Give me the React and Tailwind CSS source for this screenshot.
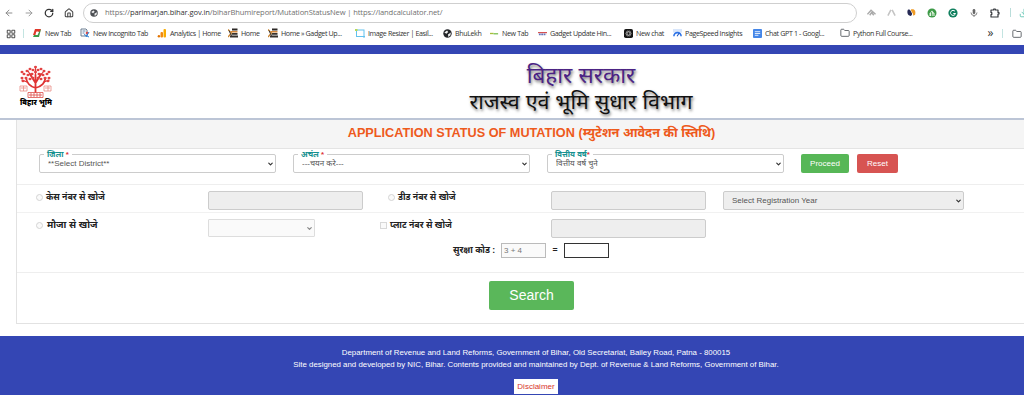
import {
    ArrowLeft,
    ArrowRight,
    ChevronDown,
    Download,
    Folder,
    House,
    LayoutGrid,
    RotateCw,
} from 'lucide-react';
import clsx from 'clsx';

function TabIcon() {
    return (
        <svg viewBox="0 0 10 10" className="size-[10px]">
            <path d="M3 1h6L8 4H4.500L3.500 7H1z" fill="#e0392b" />
            <path d="M9 1 7 9H1l1-2h3.500l1.500-3z" fill="#3f9a4b" />
            <path d="M4.500 3.500h2L5.500 6.500h-2z" fill="#fff" />
        </svg>
    );
}

function IncognitoIcon() {
    return (
        <svg viewBox="0 0 10 10" className="size-[10px]">
            <path d="M1 1h5l1 1v6H1z" fill="#fff" stroke="#5c7186" strokeWidth=".9" />
            <path d="M2.500 3h3M2.500 5h2" stroke="#5279a6" strokeWidth=".9" />
            <circle cx="7" cy="5" r="1.300" fill="#d94a4a" />
            <path d="M4 6.500 9 9M6 9l3-5" stroke="#2a80d8" strokeWidth="1" />
        </svg>
    );
}

function AnalyticsIcon() {
    return (
        <svg viewBox="0 0 10 10" className="size-[10px]">
            <rect x="6.500" y="1" width="2.500" height="8.500" rx="1" fill="#f9ab00" />
            <rect x="3.500" y="4" width="2.500" height="5.500" rx="1" fill="#f08a12" />
            <circle cx="1.900" cy="8.300" r="1.200" fill="#e37400" />
        </svg>
    );
}

function GadgetIcon() {
    return (
        <svg viewBox="0 0 10 10" className="size-[10px]">
            <path d="M4 .5h5.500v2H4z" fill="#2c2926" />
            <path d="M3 3h6.500v1.500H3z" fill="#d5893d" />
            <path d="M3.500 5h6v1.700h-6zM2 7.500h8v2H2z" fill="#35302c" />
            <path d="M0 1.500 3.500 5 0 9" fill="none" stroke="#c98532" strokeWidth="1.300" />
            <path d="M1 2.500 3.500 8" stroke="#3c3733" strokeWidth="1" />
        </svg>
    );
}

function ResizerIcon() {
    return (
        <svg viewBox="0 0 10 10" className="size-[10px]">
            <rect x="1.500" y="2" width="7.500" height="6.500" fill="#fff" stroke="#62c2ee" />
            <path d="M0 1h2.500v2H0z" fill="#b8d957" />
            <path d="M8 8h2v1.500H8z" fill="#62c2ee" />
        </svg>
    );
}

function GlobeIcon({ className, color }) {
    return (
        <svg viewBox="0 0 10 10" className={className}>
            <circle cx="5" cy="5" r="4.700" fill={color} />
            <path d="M1.500 3.800 4.500 1.800l1.300 1.500L3.800 5.200zM5.500 6 8.700 4l-.4 3-2.300 1.800z" fill="#f0f0f0" />
        </svg>
    );
}

function BhulekhIcon() {
    return <GlobeIcon className="size-[9px]" color="#24262a" />;
}

function DashIcon() {
    return (
        <svg viewBox="0 0 10 10" className="size-[9px]">
            <path d="M0 5h4" stroke="#a5bf3a" strokeWidth="1.500" />
            <path d="M4 5.300h5" stroke="#7fc257" strokeWidth="1.500" />
        </svg>
    );
}

function HindiIcon() {
    return (
        <svg viewBox="0 0 10 10" className="size-[9px]">
            <path d="M0 4h10" stroke="#d65252" strokeWidth="1.300" />
            <path d="M1 6h8" stroke="#6472b8" strokeWidth="1.800" strokeDasharray="2 .6" />
        </svg>
    );
}

function ChatIcon() {
    return (
        <svg viewBox="0 0 10 10" className="size-[9px]">
            <rect width="10" height="10" rx="2" fill="#161616" />
            <g fill="none" stroke="#b5b5b5" strokeWidth=".6">
                <ellipse cx="5" cy="5" rx="3.200" ry="1.600" />
                <ellipse cx="5" cy="5" rx="3.200" ry="1.600" transform="rotate(60 5 5)" />
                <ellipse cx="5" cy="5" rx="3.200" ry="1.600" transform="rotate(120 5 5)" />
            </g>
        </svg>
    );
}

function SpeedIcon() {
    return (
        <svg viewBox="0 0 10 10" className="size-[9px]">
            <path d="M0 0h10v4H0z" fill="#d8e6fb" />
            <path d="M1 8a4 4 0 0 1 8 0" fill="none" stroke="#2e74e8" strokeWidth="1.800" />
            <path d="M4.500 8 7 4.500" stroke="#1a56c4" strokeWidth="1.200" />
        </svg>
    );
}

function DocsIcon() {
    return (
        <svg viewBox="0 0 10 10" className="size-[9px]">
            <rect width="10" height="10" rx="1" fill="#4486e8" />
            <path d="M2 3h6M2 5h6M2 7h4" stroke="#fff" strokeWidth=".9" />
        </svg>
    );
}

function FolderIcon() {
    return <Folder className="size-[10px] text-[#4b4f54]" strokeWidth={2} />;
}

const bookmarks = [
    { label: 'New Tab', icon: TabIcon, width: 'w-[48px]' },
    { label: 'New Incognito Tab', icon: IncognitoIcon, width: 'w-[77px]' },
    { label: 'Analytics | Home', icon: AnalyticsIcon, width: 'w-[71px]' },
    { label: 'Home', icon: GadgetIcon, width: 'w-[40px]' },
    { label: 'Home » Gadget Up...', icon: GadgetIcon, width: 'w-[87px]' },
    { label: 'Image Resizer | Easil...', icon: ResizerIcon, width: 'w-[87px]' },
    { label: 'BhuLekh', icon: BhulekhIcon, width: 'w-[47px]' },
    { label: 'New Tab', icon: DashIcon, width: 'w-[48px]' },
    { label: 'Gadget Update Hin...', icon: HindiIcon, width: 'w-[86px]' },
    { label: 'New chat', icon: ChatIcon, width: 'w-[49px]' },
    { label: 'PageSpeed Insights', icon: SpeedIcon, width: 'w-[80px]' },
    { label: 'Chat GPT 1 - Googl...', icon: DocsIcon, width: 'w-[88px]' },
    { label: 'Python Full Course...', icon: FolderIcon, width: 'w-[80px]' },
];

function Extensions() {
    return (
        <div className="ml-[10px] flex items-center gap-[11px]">
            <svg viewBox="0 0 10 10" className="size-[9px]">
                <path d="M.5 7 4.500 2.500 9.500 7M3 8l2.200-3L7.500 8" fill="none" stroke="#aaa" strokeWidth="1.600" />
            </svg>
            <svg viewBox="0 0 10 10" className="size-[9px]">
                <path d="M1 8.500 4.300 2M9 8.500 5.700 2" stroke="#c4c4c4" strokeWidth="1.700" />
            </svg>
            <svg viewBox="0 0 10 10" className="size-[9px]">
                <path d="M1 2C4 1 4 4 5 5s1 3-1 4C0 8 0 4 1 2z" fill="#262a55" />
                <path d="M4.500 1.500C9 .5 10 4 9 7.500L7 8.500C7 5 4 4.500 4.500 1.500z" fill="#ef9c28" />
            </svg>
            <svg viewBox="0 0 10 10" className="size-[10px]">
                <circle cx="5" cy="5" r="4.500" fill="#3d9a47" />
                <path d="M2.500 5.500 5 2.500l2.500 3V8h-5z" fill="#e5f3e4" />
                <path d="M4.500 4v4M6 5.500V8" stroke="#3d9a47" strokeWidth=".8" />
            </svg>
            <svg viewBox="0 0 10 10" className="size-[10px]">
                <circle cx="5" cy="5" r="4.600" fill="#11805f" />
                <path d="M7 3.300A2.500 2.500 0 1 0 7.500 5.500H5.300" fill="none" stroke="#fff" strokeWidth="1" />
            </svg>
            <svg viewBox="0 0 10 10" className="size-[10px]">
                <rect x="3.700" y="1" width="2.600" height="5" rx="1.300" fill="#666" />
                <path d="M2 4.500a3 3 0 0 0 6 0M5 7.500V9" fill="none" stroke="#777" strokeWidth=".9" />
            </svg>
            <svg viewBox="0 0 10 10" className="size-[10px]">
                <path
                    d="M1 2h2.700V1h1.600v1H8v2.500h1v1.500H8V9H1V6.500h.8V4.500H1z"
                    fill="none"
                    stroke="#35383c"
                    strokeWidth="1.200"
                    strokeLinejoin="round"
                />
            </svg>
            <span className="-ml-px h-[9px] w-px bg-[#b9ddda]" />
            <Download className="-ml-[3px] size-[10px] shrink-0 text-[#66c6b5]" strokeWidth={2.200} />
        </div>
    );
}

function Browser() {
    return (
        <div className="h-[45px] overflow-hidden bg-white font-['Open_Sans','Noto_Sans',sans-serif]">
            <div className="flex h-[25px] w-[1040px] items-center pl-[4px]">
                <div className="flex w-[79px] items-center">
                    <ArrowLeft className="size-[10px] text-[#888]" strokeWidth={2.300} />
                    <ArrowRight className="ml-[10px] size-[10px] text-[#999]" strokeWidth={2.300} />
                    <RotateCw className="ml-[10px] size-[10px] text-[#333]" strokeWidth={3} />
                    <House className="ml-[10px] size-[10px] text-[#444]" strokeWidth={2.500} />
                </div>
                <div className="flex h-[20px] w-[774px] items-center rounded-full border border-[#cfcfcf] pl-[6px]">
                    <GlobeIcon className="size-[8px]" color="#4d5054" />
                    <span className="ml-[7px] text-[7.600px] tracking-[-0.120px] whitespace-nowrap text-[#707070]">
                        https://<span className="text-[#333]">parimarjan.bihar.gov.in</span>
                        /biharBhumireport/MutationStatusNew | https://landcalculator.net/
                    </span>
                </div>
                <Extensions />
            </div>
            <div className="flex h-[17px] w-[1024px] items-center pl-[6px] text-[7.100px] tracking-[-0.380px] text-[#333]">
                <LayoutGrid className="size-[10px] text-[#555]" strokeWidth={2.500} />
                <span className="mr-[8px] ml-[7px] h-[9px] w-px bg-[#c3e4e1]" />
                {bookmarks.map(({ label, icon: Icon, width }, index) => (
                    <div key={index} className={clsx('flex shrink-0 items-center gap-[3px] whitespace-nowrap', width)}>
                        <span className="flex w-[10px] shrink-0 justify-center">
                            <Icon />
                        </span>
                        {label}
                    </div>
                ))}
                <span className="ml-auto pb-[2px] text-[12px] leading-none">»</span>
                <span className="mr-[9px] ml-[9px] h-[9px] w-px bg-[#c3e4e1]" />
                <span className="mr-[2px]">
                    <FolderIcon />
                </span>
            </div>
        </div>
    );
}

function Logo() {
    return (
        <div className="flex w-[36px] flex-col items-center">
            <svg viewBox="0 0 34 34" className="h-[34px] w-[34px]">
                <g fill="none" stroke="#df3434" strokeLinecap="round">
                    <path d="M16.500 27V10M16.500 23C10 21 8 18 7 13M16.500 23c7-2 9-5 10-10M16.500 18 11 9M16.500 18 22 9" strokeWidth="1.800" />
                    <path d="M8 17 3 15M25 17l5-2M12 11 9 6M21 11l4-5M16.500 10V3" strokeWidth="1.200" />
                </g>
                <g fill="#e34242">
                    {[
                        [16.500, 2], [14, 5], [19, 5], [11, 4], [22, 4], [8, 6], [25, 6], [5, 9], [28, 9], [9, 10],
                        [24, 10], [3, 13], [30, 13], [7, 13], [26, 13], [4, 16], [29, 16], [13, 9], [20, 9],
                        [11, 14], [22, 14], [16.500, 7], [14, 13], [19, 13], [30, 7], [3, 7],
                    ].map(([x, y]) => (
                        <ellipse key={`${x}-${y}`} cx={x} cy={y} rx="1.500" ry="1.200" />
                    ))}
                </g>
                <g fill="none" stroke="#e88a84" strokeWidth=".8">
                    <path d="M1 21h7v5H1zM2 23h5M4.500 21v5M25 21h7v5h-7zM26 23h5M29 21v5" />
                    <path d="M9 27.500h15v5H9zM10 30h13M12 28v4M15 28v4M18 28v4M21 28v4" stroke="#dd4f4a" />
                </g>
            </svg>
            <span className="text-[7.200px] leading-[8px] font-black whitespace-nowrap text-black">बिहार भूमि</span>
        </div>
    );
}

function Header() {
    return (
        <header className="relative flex h-[66px] items-start border-b-2 border-[#bcc5d6] bg-white pt-[11px] pl-[18px]">
            <Logo />
            <h1 className="absolute inset-x-0 top-[9px] pl-[138px] text-center leading-[26px] whitespace-nowrap text-[#111] [text-shadow:1px_2px_3px_rgba(0,0,0,0.55)]">
                <span className="block text-[22.500px] text-[#4b2384]">बिहार सरकार</span>
                <span className="block text-[21.400px]">राजस्व एवं भूमि सुधार विभाग</span>
            </h1>
        </header>
    );
}

function Select({ className, children, disabled }) {
    return (
        <div className={clsx('relative', className)}>
            <select
                disabled={disabled}
                className={clsx(
                    'block h-full w-full appearance-none rounded-[2px] border border-[#ccc] pl-[8px] text-[8px] text-[#555] opacity-100',
                    disabled ? 'bg-[#eee]' : 'bg-white',
                )}
            >
                <option>{children}</option>
            </select>
            <ChevronDown className="absolute top-1/2 right-[2px] size-[7px] -translate-y-1/2 text-[#333]" strokeWidth={4} />
        </div>
    );
}

function LabelledSelect({ label, gap, className, children }) {
    return (
        <div className={clsx('relative h-[19px]', className)}>
            <Select className="h-full w-full">{children}</Select>
            <label className="absolute -top-[5px] left-[5px] h-[9px] bg-white px-[3px] text-[7.800px] leading-[11px] font-bold whitespace-nowrap text-[#159090]">
                {label}
                {gap && ' '}
                <span className="text-[#d33]">*</span>
            </label>
        </div>
    );
}

function Disabled({ className }) {
    return <input disabled className={clsx('h-[19px] w-[155px] rounded-[2px] border border-[#ccc] bg-[#eee]', className)} />;
}

function Radio() {
    return <span className="size-[7px] shrink-0 rounded-full border border-[#d4d4d4] bg-[#fafafa]" />;
}

export default function App() {
    return (
        <div className="h-[400px] w-[1024px] overflow-hidden bg-white font-['Liberation_Sans','Noto_Sans_Devanagari','Noto_Sans',sans-serif]">
            <Browser />
            <div className="h-[9px] bg-[#3446b4]" />
            <Header />

            <main className="ml-[16px] h-[204px] border border-t-0 border-r-0 border-[#e2e2e2]">
                <h2 className="flex h-[29px] items-center justify-center border-b border-[#e4e4e4] bg-[#f5f5f5] pl-[22px] text-[12.700px] font-bold whitespace-nowrap text-[#ee5a1c]">
                    APPLICATION STATUS OF MUTATION (म्युटेशन आवेदन की स्तिथि)
                </h2>

                <div className="flex h-[36px] items-start border-b border-[#eee] pt-[5px] pl-[22px]">
                    <LabelledSelect label="जिला" gap className="w-[237px]">**Select District**</LabelledSelect>
                    <LabelledSelect label="अचंल" gap className="ml-[17px] w-[237px]">---चयन करे---</LabelledSelect>
                    <LabelledSelect label="वित्तीय वर्ष" className="ml-[17px] w-[237px]">वित्तीय वर्ष चुने</LabelledSelect>
                    <button className="ml-[17px] h-[19px] w-[48px] rounded-[2px] bg-[#57b757] text-[8px] text-white">Proceed</button>
                    <button className="ml-[8px] h-[19px] w-[41px] rounded-[2px] bg-[#d75452] text-[8px] text-white">Reset</button>
                </div>

                <div className="flex h-[28px] items-start border-b border-[#f1f1f1] pt-[6px] pl-[19px] text-[8.700px] font-bold text-[#222]">
                    <label className="flex h-[13px] w-[172px] items-center gap-[3px] whitespace-nowrap">
                        <Radio />
                        केस नंबर से खोजे
                    </label>
                    <Disabled />
                    <label className="ml-[25px] flex h-[13px] w-[163px] items-center gap-[3px] whitespace-nowrap">
                        <Radio />
                        डीड नंबर से खोजे
                    </label>
                    <Disabled />
                    <Select disabled className="ml-[17px] h-[19px] w-[241px] font-normal">Select Registration Year</Select>
                </div>

                <div className="h-[60px] border-b border-[#eee] pt-[6px]">
                    <div className="flex h-[19px] items-start pl-[19px] text-[8.700px] font-bold text-[#222]">
                        <label className="flex h-[13px] w-[172px] items-center gap-[4px] text-[9.600px] whitespace-nowrap">
                            <Radio />
                            मौजा से खोजे
                        </label>
                        <div className="relative h-[18px] w-[107px] rounded-[1px] border border-[#ddd] bg-[#fafafa]">
                            <ChevronDown className="absolute top-[5px] right-[1px] size-[7px] text-[#888]" strokeWidth={4} />
                        </div>
                        <label className="ml-[65px] flex h-[13px] w-[171px] items-center gap-[3px] whitespace-nowrap">
                            <span className="size-[7px] shrink-0 border border-[#d8d8d8] bg-[#fafafa]" />
                            प्लाट नंबर से खोजे
                        </label>
                        <Disabled />
                    </div>
                    <div className="mt-[5px] flex h-[15px] items-center pl-[436px] text-[8.700px] font-bold text-[#222]">
                        <span className="w-[48px] whitespace-nowrap">सुरक्षा कोड :</span>
                        <input
                            disabled
                            defaultValue="3 + 4"
                            className="h-[15px] w-[45px] border border-[#bbb] bg-[#fafafa] pl-[2px] text-[8px] font-normal text-[#777]"
                        />
                        <span className="w-[18px] text-center">=</span>
                        <input className="h-[15px] w-[45px] border border-[#333] bg-white" />
                    </div>
                </div>

                <div className="flex pt-[8px] pl-[472px]">
                    <button className="h-[29px] w-[85px] rounded-[2px] bg-[#5ab75a] text-[14px] text-white">Search</button>
                </div>
            </main>

            <footer className="mt-[12px] flex h-[59px] flex-col items-center bg-[#3446b4] pt-[11px] pl-[48px] text-[7.870px] leading-[11.500px] whitespace-nowrap text-white">
                <p>Department of Revenue and Land Reforms, Government of Bihar, Old Secretariat, Bailey Road, Patna - 800015</p>
                <p>Site designed and developed by NIC, Bihar. Contents provided and maintained by Dept. of Revenue &amp; Land Reforms, Government of Bihar.</p>
                <a className="mt-[9px] h-[15px] bg-white px-[3px] text-[8px] leading-[15px] text-[#d8342c]">Disclaimer</a>
            </footer>
        </div>
    );
}
